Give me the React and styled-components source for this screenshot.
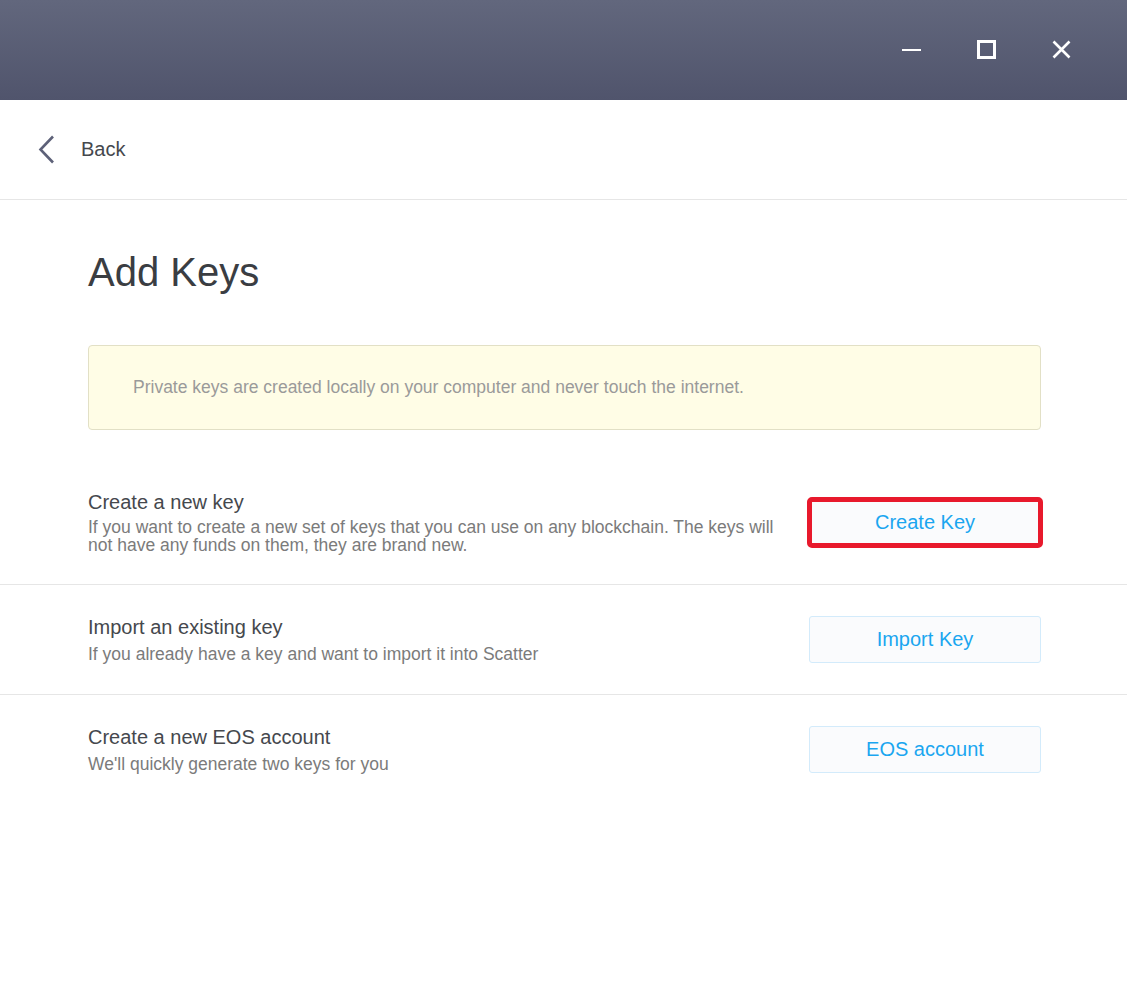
import React from 'react';
import styled, {createGlobalStyle} from "styled-components";

const GlobalStyle = createGlobalStyle`
  html, body {
    margin: 0;
    padding: 0;
    background: #ffffff;
    font-family: "Liberation Sans", Arial, sans-serif;
  }
  * {
    box-sizing: border-box;
  }
`;

const options = [
    {
        title: 'Create a new key',
        description: 'If you want to create a new set of keys that you can use on any blockchain. The keys will not have any funds on them, they are brand new.',
        button: 'Create Key',
        highlighted: true,
    },
    {
        title: 'Import an existing key',
        description: 'If you already have a key and want to import it into Scatter',
        button: 'Import Key',
    },
    {
        title: 'Create a new EOS account',
        description: "We'll quickly generate two keys for you",
        button: 'EOS account',
    },
];

const App = () => {
    return (
        <>
            <GlobalStyle/>
            <StyledWindow>
                <TitleBar>
                    <WindowButton aria-label="minimize">
                        <svg width="20" height="20" viewBox="0 0 20 20">
                            <line x1="0" y1="10" x2="19" y2="10" stroke="#fff" strokeWidth="2"/>
                        </svg>
                    </WindowButton>
                    <WindowButton aria-label="maximize">
                        <svg width="20" height="20" viewBox="0 0 20 20">
                            <rect x="1.5" y="1.5" width="16" height="16" fill="none" stroke="#fff" strokeWidth="3"/>
                        </svg>
                    </WindowButton>
                    <WindowButton aria-label="close">
                        <svg width="20" height="20" viewBox="0 0 20 20">
                            <path d="M1.5 1.5 L17.5 17.5 M17.5 1.5 L1.5 17.5" stroke="#fff" strokeWidth="2.6"/>
                        </svg>
                    </WindowButton>
                </TitleBar>

                <BackBar>
                    <BackLink>
                        <svg width="17" height="29" viewBox="0 0 17 29">
                            <polyline points="15,1.5 2.5,14.5 15,27.5" fill="none" stroke="#5d6178" strokeWidth="2.6"/>
                        </svg>
                        <span>Back</span>
                    </BackLink>
                </BackBar>

                <Content>
                    <PageTitle>Add Keys</PageTitle>
                    <Notice>Private keys are created locally on your computer and never touch the internet.</Notice>
                </Content>

                {options.map((item, i) => (
                    <OptionRow key={item.button} $first={i === 0} $last={i === options.length - 1}>
                        <div className="text">
                            <h5>{item.title}</h5>
                            <p>{item.description}</p>
                        </div>
                        <ActionButton $highlighted={item.highlighted}>{item.button}</ActionButton>
                    </OptionRow>
                ))}
            </StyledWindow>
        </>
    );
};

const StyledWindow = styled.div`
  width: 1127px;
  min-height: 1000px;
  background: #ffffff;
`;

const TitleBar = styled.div`
  height: 100px;
  display: flex;
  justify-content: flex-end;
  align-items: center;
  padding-right: 28px;
  background: linear-gradient(to bottom, #62677d, #50546c);
`;

const WindowButton = styled.div`
  width: 75px;
  height: 100px;
  display: flex;
  align-items: center;
  justify-content: center;
  svg {
    display: block;
  }
`;

const BackBar = styled.div`
  height: 100px;
  display: flex;
  align-items: center;
  padding-left: 38px;
  border-bottom: 1px solid #e6e6e6;
`;

const BackLink = styled.div`
  display: flex;
  align-items: center;
  gap: 26px;
  span {
    font-size: 20px;
    color: #45484d;
  }
`;

const Content = styled.div`
  padding: 0 86px 0 88px;
`;

const PageTitle = styled.h1`
  margin: 48px 0 0;
  font-size: 40px;
  line-height: 48px;
  font-weight: 400;
  color: #3a3d42;
`;

const Notice = styled.div`
  margin-top: 49px;
  height: 85px;
  display: flex;
  align-items: center;
  padding: 0 44px;
  background: #fffde6;
  border: 1px solid #e2e0c6;
  border-radius: 4px;
  font-size: 17.5px;
  color: #9a9a9a;
`;

const OptionRow = styled.div`
  display: flex;
  align-items: center;
  gap: 34px;
  padding: ${p => p.$first ? '60px 86px 30px 88px' : '30px 86px 31px 88px'};
  border-bottom: ${p => p.$last ? 'none' : '1px solid #e6e6e6'};

  .text {
    flex: 1;
    h5 {
      margin: 0;
      font-size: 20px;
      line-height: 24px;
      font-weight: 400;
      color: #45484d;
    }
    p {
      margin: ${p => p.$first ? '4px' : '6px'} 0 0;
      font-size: 17.5px;
      line-height: 18px;
      color: #7b7b7b;
    }
  }
`;

const ActionButton = styled.div`
  flex: 0 0 232px;
  height: 47px;
  display: flex;
  align-items: center;
  justify-content: center;
  background: #fafbfd;
  border: 1px solid #d3ebfb;
  border-radius: 3px;
  font-size: 20px;
  color: #1aa6f0;
  outline: ${p => p.$highlighted ? '5px solid #e8192c' : 'none'};
  outline-offset: -3px;
`;

export default App;
